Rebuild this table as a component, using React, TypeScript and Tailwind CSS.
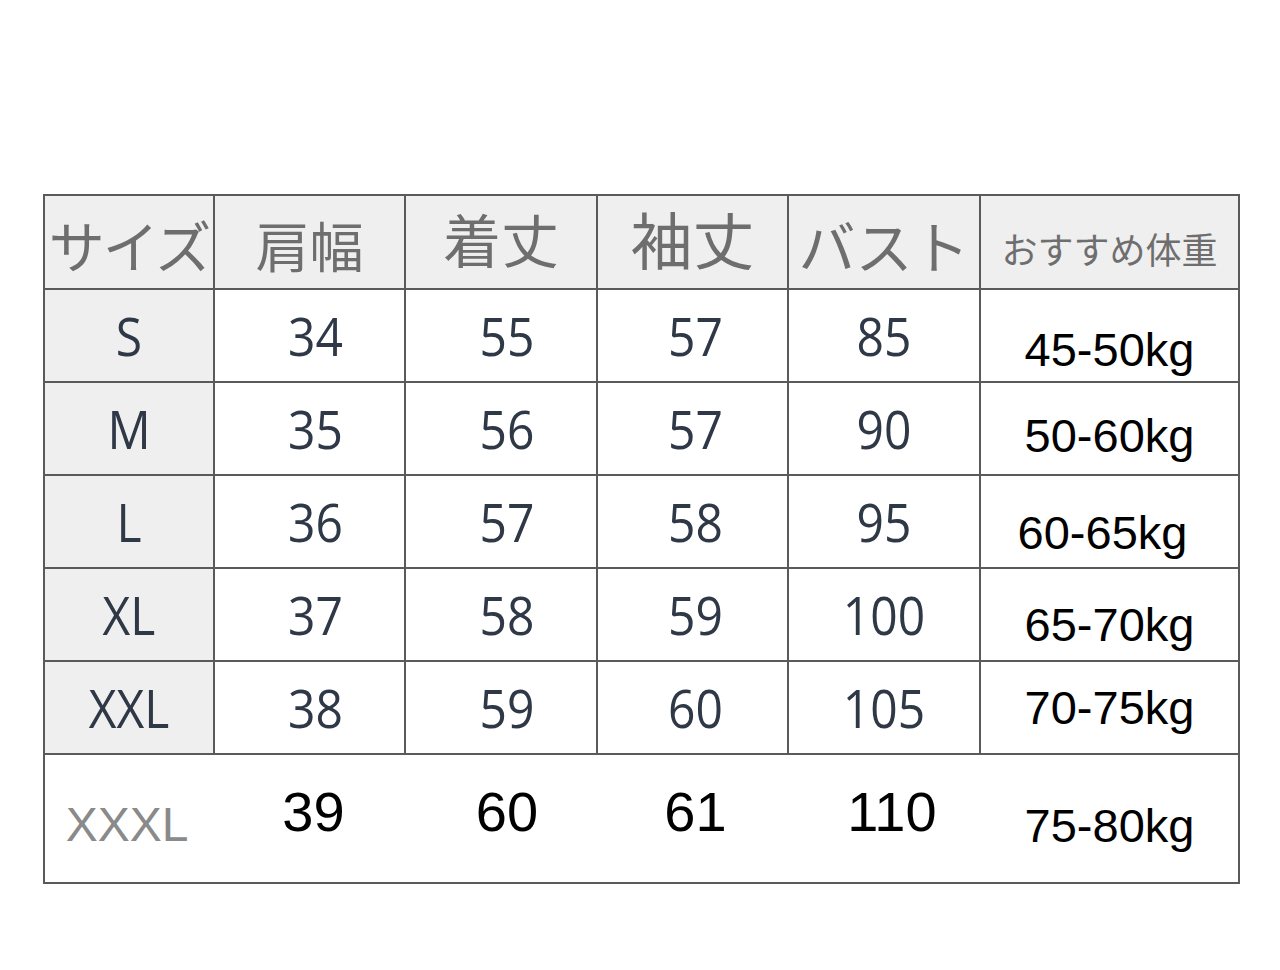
const headers = [
  { label: "サイズ", cls: "text-[56px] pt-[4px]" },
  { label: "肩幅", cls: "text-[54px] pt-[6px]" },
  { label: "着丈", cls: "text-[58px] -mt-[8px]" },
  { label: "袖丈", cls: "text-[62px] -mt-[8px]" },
  { label: "バスト", cls: "text-[57px] pt-[4px]" },
  { label: "おすすめ体重", cls: "text-[36px] pt-[12px]" },
];

const rows = [
  { size: "S", vals: ["34", "55", "57", "85"], kg: "45-50kg", kgPad: "pt-[28px]" },
  { size: "M", vals: ["35", "56", "57", "90"], kg: "50-60kg", kgPad: "pt-[14px]" },
  { size: "L", vals: ["36", "57", "58", "95"], kg: "60-65kg", kgPad: "pt-[22px] pr-[14px]" },
  { size: "XL", vals: ["37", "58", "59", "100"], kg: "65-70kg", kgPad: "pt-[20px]" },
  { size: "XXL", vals: ["38", "59", "60", "105"], kg: "70-75kg", kgPad: "pt-[0px]" },
];

const widths = ["w-[170px]", "w-[191px]", "w-[192px]", "w-[191px]", "w-[192px]"];
const offsets = ["pl-[12px]", "pl-[12px]", "pl-[6px]", "pl-[0px]"];
const lastOffsets = ["pl-[6px]", "pl-[10px]", "pl-[4px]", "pl-[14px]"];

export default function App() {
  return (
    <div className="w-[1280px] h-[970px] bg-white relative overflow-hidden">
      <div className="pt-[194px] pl-[43px]">
        <div className="w-[1197px] border-2 border-[#5a5a5a] bg-white">
          {/* HEADER */}
          <div className="flex h-[94px] bg-[#efefef] border-b-2 border-[#5a5a5a]">
            {headers.map((h, i) => (
              <div
                key={h.label}
                className={`${i < 5 ? widths[i] + " border-r-2 border-[#5a5a5a]" : "flex-1"} flex items-center justify-center`}
              >
                <span
                  className={`${h.cls} text-[#6e6e6e] leading-none whitespace-nowrap`}
                  style={{ fontFamily: '"Noto Sans CJK JP", sans-serif', letterSpacing: i === 0 ? "-2px" : "0" }}
                >
                  {h.label}
                </span>
              </div>
            ))}
          </div>

          {/* DATA ROWS */}
          {rows.map((r) => (
            <div key={r.size} className="flex h-[93px] border-b-2 border-[#5a5a5a]">
              <div className="w-[170px] bg-[#efefef] border-r-2 border-[#5a5a5a] flex items-center justify-center">
                <span className="text-[48px] text-[#2f3846] leading-none font-['Open_Sans',sans-serif] scale-y-110">
                  {r.size}
                </span>
              </div>
              {r.vals.map((v, i) => (
                <div
                  key={i}
                  className={`${widths[i + 1]} border-r-2 border-[#5a5a5a] flex items-center justify-center ${offsets[i]}`}
                >
                  <span className="text-[48px] text-[#2f3846] leading-none font-['Open_Sans',sans-serif] scale-y-110">
                    {v}
                  </span>
                </div>
              ))}
              <div className={`flex-1 flex items-center justify-center ${r.kgPad}`}>
                <span className="text-[47px] text-black leading-none font-['Liberation_Sans',sans-serif]">
                  {r.kg}
                </span>
              </div>
            </div>
          ))}

          {/* LAST ROW */}
          <div className="flex h-[127px]">
            <div className="w-[170px] flex items-center justify-center pt-[12px] pr-[6px]">
              <span className="text-[48px] text-[#8a8a8a] leading-none font-['Liberation_Sans',sans-serif]">XXXL</span>
            </div>
            {["39", "60", "61", "110"].map((v, i) => (
              <div key={v} className={`${widths[i + 1]} flex items-center justify-center -mt-[14px] ${lastOffsets[i]}`}>
                <span className="text-[56px] text-black leading-none font-['Liberation_Sans',sans-serif]">{v}</span>
              </div>
            ))}
            <div className="flex-1 flex items-center justify-center pt-[14px]">
              <span className="text-[47px] text-black leading-none font-['Liberation_Sans',sans-serif]">75-80kg</span>
            </div>
          </div>
        </div>
      </div>
    </div>
  );
}
